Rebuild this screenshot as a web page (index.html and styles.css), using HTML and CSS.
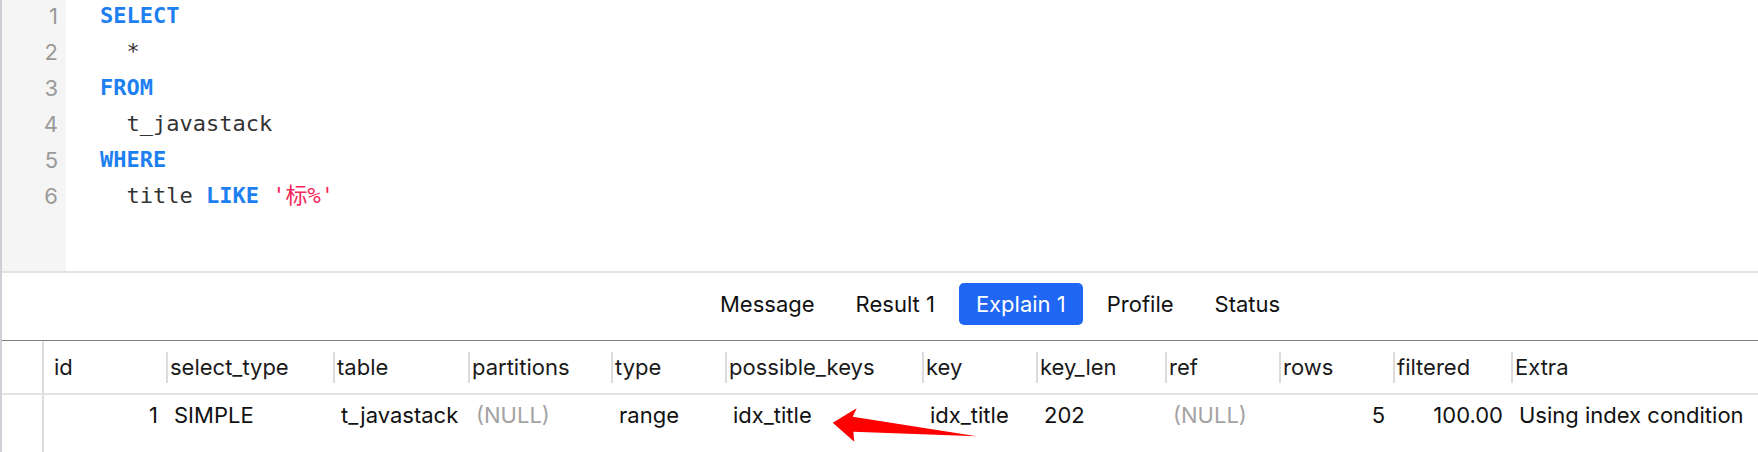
FILE: index.html
```html
<!DOCTYPE html>
<html lang="en">
<head>
<meta charset="utf-8">
<title>Explain</title>
<link rel="stylesheet" href="styles.css">
</head>
<body>
<div class="app">
  <div class="editor">
    <div class="gutter">
      <div class="ln">1</div>
      <div class="ln">2</div>
      <div class="ln">3</div>
      <div class="ln">4</div>
      <div class="ln">5</div>
      <div class="ln">6</div>
    </div>
    <div class="code">
      <div class="line"><span class="kw">SELECT</span></div>
      <div class="line">  *</div>
      <div class="line"><span class="kw">FROM</span></div>
      <div class="line">  t_javastack</div>
      <div class="line"><span class="kw">WHERE</span></div>
      <div class="line">  title <span class="kw">LIKE</span> <span class="str">'标%'</span></div>
    </div>
  </div>
  <div class="tabs">
    <span class="tab">Message</span>
    <span class="tab">Result 1</span>
    <span class="tab active">Explain 1</span>
    <span class="tab">Profile</span>
    <span class="tab">Status</span>
  </div>
  <div class="grid">
    <div class="th rownum"></div>
    <div class="th first">id</div>
    <div class="th">select_type</div>
    <div class="th">table</div>
    <div class="th">partitions</div>
    <div class="th">type</div>
    <div class="th">possible_keys</div>
    <div class="th">key</div>
    <div class="th">key_len</div>
    <div class="th">ref</div>
    <div class="th">rows</div>
    <div class="th">filtered</div>
    <div class="th">Extra</div>

    <div class="td rownum"></div>
    <div class="td num">1</div>
    <div class="td">SIMPLE</div>
    <div class="td">t_javastack</div>
    <div class="td null">(NULL)</div>
    <div class="td">range</div>
    <div class="td">idx_title</div>
    <div class="td">idx_title</div>
    <div class="td">202</div>
    <div class="td null">(NULL)</div>
    <div class="td num">5</div>
    <div class="td num">100.00</div>
    <div class="td">Using index condition</div>
  </div>
  <svg class="arrow" width="1758" height="452" viewBox="0 0 1758 452" aria-hidden="true">
    <polygon points="832.7,422.7 856.7,408.3 852.7,416.7 976.7,436.3 853.3,431.7 854.3,441.7" fill="#fe0000"/>
  </svg>
</div>
</body>
</html>
```
FILE: styles.css
```css
html, body {
  margin: 0;
  padding: 0;
  background: #ffffff;
}

body {
  width: 1758px;
  height: 452px;
  overflow: hidden;
}

.app {
  position: relative;
  height: 452px;
  border-left: 2px solid #cdd0d4;
  box-sizing: border-box;
  font-family: "Inter", "Liberation Sans", sans-serif;
}

/* ---------- editor ---------- */
.editor {
  display: flex;
  height: 273px;
  border-bottom: 2px solid #e3e3e3;
  box-sizing: border-box;
  overflow: hidden;
}

.gutter {
  width: 64px;
  flex: none;
  background: #f5f5f5;
  box-sizing: border-box;
  padding-right: 8px;
  text-align: right;
  font-size: 22px;
  color: #9a9a9a;
}

.ln:first-child,
.line:first-child {
  margin-top: -2px;
}

.ln,
.line {
  height: 36px;
  line-height: 36px;
}

.code {
  padding-left: 34px;
  font-family: "DejaVu Sans Mono", "Noto Sans CJK SC", monospace;
  font-size: 22px;
  color: #333333;
}

.line {
  white-space: pre;
}

.kw {
  color: #1d7ff0;
  font-weight: bold;
}

.str {
  color: #f5265a;
}

/* ---------- tabs ---------- */
.tabs {
  display: flex;
  align-items: flex-start;
  gap: 7px;
  height: 68px;
  box-sizing: border-box;
  padding: 10px 0 0 701px;
  border-bottom: 1px solid #7d7d7d;
}

.tab {
  height: 42px;
  line-height: 42px;
  padding: 0 17px;
  font-size: 22px;
  color: #111111;
  border-radius: 5px;
  white-space: nowrap;
}

.tab.active {
  background: #1f66f5;
  color: #ffffff;
}

/* ---------- result grid ---------- */
.grid {
  display: grid;
  grid-template-columns: 42px 122px 167px 135px 143px 114px 197px 114px 129px 114px 114px 118px 1fr;
  font-size: 22px;
  color: #1a1a1a;
}

.th {
  display: flex;
  align-items: center;
  height: 54px;
  line-height: 52px;
  box-sizing: border-box;
  border-bottom: 2px solid #e2e2e2;
  white-space: nowrap;
}

.th::before {
  content: "";
  flex: none;
  width: 2px;
  height: 31px;
  background: #dcdcdc;
  margin-right: 2px;
}

.th.first {
  padding-left: 10px;
}

.th.first::before,
.th.rownum::before {
  display: none;
}

.rownum {
  border-right: 2px solid #dedede;
  box-sizing: border-box;
}

.td {
  height: 57px;
  line-height: 41px;
  padding: 0 8px;
  white-space: nowrap;
  color: #111111;
}

.td.rownum {
  padding: 0;
}

.td.num {
  text-align: right;
}

.td.null {
  color: #a3a3a3;
}

.arrow {
  position: absolute;
  left: -2px;
  top: 0;
  pointer-events: none;
}
```
